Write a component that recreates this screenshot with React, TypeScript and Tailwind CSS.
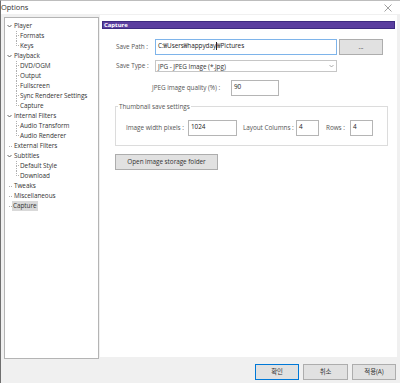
import React from "react";

const font = { fontFamily: '"Open Sans", "Noto Sans CJK KR", sans-serif' };

function Chevron() {
  return (
    <svg width="5" height="4" viewBox="0 0 5 4" className="shrink-0">
      <path d="M0.5 1 L2.5 3 L4.5 1" fill="none" stroke="#555" strokeWidth="0.9" />
    </svg>
  );
}

type Item = { label: string; level: 0 | 1; parent?: boolean; selected?: boolean; last?: boolean };

const items: Item[] = [
  { label: "Player", level: 0, parent: true },
  { label: "Formats", level: 1 },
  { label: "Keys", level: 1, last: true },
  { label: "Playback", level: 0, parent: true },
  { label: "DVD/OGM", level: 1 },
  { label: "Output", level: 1 },
  { label: "Fullscreen", level: 1 },
  { label: "Sync Renderer Settings", level: 1 },
  { label: "Capture", level: 1, last: true },
  { label: "Internal Filters", level: 0, parent: true },
  { label: "Audio Transform", level: 1 },
  { label: "Audio Renderer", level: 1, last: true },
  { label: "External Filters", level: 0 },
  { label: "Subtitles", level: 0, parent: true },
  { label: "Default Style", level: 1 },
  { label: "Download", level: 1, last: true },
  { label: "Tweaks", level: 0 },
  { label: "Miscellaneous", level: 0 },
  { label: "Capture", level: 0, selected: true },
];

function TreeRow({ it }: { it: Item }) {
  if (it.level === 1) {
    return (
      <div className="flex h-[10px] items-center whitespace-nowrap">
        <div className="ml-[11px] flex h-[10px] w-[3px] flex-col">
          <div className="h-[5px] border-l border-b border-dotted border-[#b0b0b0]" />
          {!it.last && <div className="h-[5px] border-l border-dotted border-[#b0b0b0]" />}
        </div>
        <span className="px-[1px] leading-[10px] text-[#333]">{it.label}</span>
      </div>
    );
  }
  return (
    <div className="flex h-[10px] items-center whitespace-nowrap">
      <div className="ml-[1px] flex w-[6px] items-center justify-center">
        {it.parent ? <Chevron /> : <div className="ml-[3px] h-0 w-[3px] border-b border-dotted border-[#b0b0b0]" />}
      </div>
      <span
        className={
          "px-[1px] leading-[10px] text-[#333] " + (it.selected ? "bg-[#d9d9d9]" : "ml-[1px]")
        }
      >
        {it.label}
      </span>
    </div>
  );
}

function Input({ w, children, focused }: { w: string; children: React.ReactNode; focused?: boolean }) {
  return (
    <div
      className={
        "flex h-[16px] shrink-0 items-start whitespace-nowrap bg-white px-[2px] pt-[1px] text-[#222] " +
        w +
        " border " +
        (focused ? "border-[#7eb4ea]" : "border-[#b5b5b5]")
      }
    >
      {children}
    </div>
  );
}

function Btn({ children, w, def }: { children: React.ReactNode; w: string; def?: boolean }) {
  return (
    <div
      className={
        "flex h-[16px] shrink-0 items-center justify-center whitespace-nowrap bg-[#e1e1e1] text-[#333] border " +
        w +
        " " +
        (def ? "border-[#0078d7]" : "border-[#adadad]")
      }
    >
      {children}
    </div>
  );
}

export default function App() {
  return (
    <div
      className="flex h-[383px] w-[400px] flex-col border-l border-[#6f6f6f] border-t border-t-[#bdbdbd] bg-[#f0f0f0] text-[6.4px] tracking-[-0.05px]"
      style={font}
    >
      {/* title bar */}
      <div className="flex h-[13px] items-center justify-between bg-white pr-[8px]">
        <span className="text-[7.5px] leading-[13px] text-[#333]">Options</span>
        <svg width="8" height="8" viewBox="0 0 8 8">
          <path d="M0.5 0.5 L7.5 7.5 M7.5 0.5 L0.5 7.5" stroke="#888" strokeWidth="0.8" />
        </svg>
      </div>

      <div className="flex gap-[1px] pl-[3px] pt-[1px]">
        {/* tree */}
        <div className="mt-[2px] h-[342px] w-[95px] border border-[#b4b4b4] bg-white pt-[3px]">
          {items.map((it, i) => (
            <TreeRow key={i} it={it} />
          ))}
        </div>

        {/* page */}
        <div className="flex h-[342px] w-[297px] flex-col bg-white whitespace-nowrap">
          <div className="mx-[2px] mt-[6px] flex h-[8px] items-center border border-[#3d2a80] bg-[#5a3e9f] pl-[1px]">
            <span className="text-[6px] font-bold leading-[8px] text-white">Capture</span>
          </div>

          <div className="mt-[10px] flex items-center">
            <span className="ml-[16px] w-[39px] text-[#555]">Save Path :</span>
            <Input w="w-[182px]" focused>
              <span>C:₩Users₩happyday</span>
              <span className="mt-[1px] h-[8px] w-px bg-[#222]" />
              <span>₩Pictures</span>
            </Input>
            <div className="ml-[2px]">
              <Btn w="w-[44px]">...</Btn>
            </div>
          </div>

          <div className="mt-[5px] flex items-center">
            <span className="ml-[16px] w-[39px] text-[#555]">Save Type :</span>
            <div className="flex h-[12px] w-[182px] items-center justify-between border border-[#c6c6c6] bg-white px-[2px] text-[#333]">
              <span className="leading-[9px]">JPG - JPEG Image (*.jpg)</span>
              <svg width="5" height="4" viewBox="0 0 5 4">
                <path d="M0.5 1 L2.5 3 L4.5 1" fill="none" stroke="#888" strokeWidth="0.7" />
              </svg>
            </div>
          </div>

          <div className="mt-[8px] flex items-center">
            <span className="ml-[52px] w-[79px] text-[#555]">JPEG image quality (%) :</span>
            <Input w="w-[48px]">90</Input>
          </div>

          <div className="relative ml-[15px] mt-[10px] h-[40px] w-[273px] border border-[#dcdcdc]">
            <span className="absolute left-[2px] top-[-5px] bg-white px-[1px] leading-[9px] text-[#555]">
              Thumbnail save settings
            </span>
            <div className="mt-[13px] flex items-center">
              <span className="ml-[10px] w-[62px] text-[#555]">Image width pixels :</span>
              <Input w="w-[49px]">1024</Input>
              <span className="ml-[6px] w-[53px] text-[#555]">Layout Columns :</span>
              <Input w="w-[23px]">4</Input>
              <span className="ml-[7px] w-[24px] text-[#555]">Rows :</span>
              <Input w="w-[23px]">4</Input>
            </div>
          </div>

          <div className="ml-[15px] mt-[8px]">
            <Btn w="w-[103px]">Open image storage folder</Btn>
          </div>
        </div>
      </div>

      <div className="mt-[5px] flex justify-end gap-[4px] pr-[4px]">
        <Btn w="w-[44px]" def>
          확인
        </Btn>
        <Btn w="w-[45px]">취소</Btn>
        <Btn w="w-[44px]">적용(A)</Btn>
      </div>
    </div>
  );
}
